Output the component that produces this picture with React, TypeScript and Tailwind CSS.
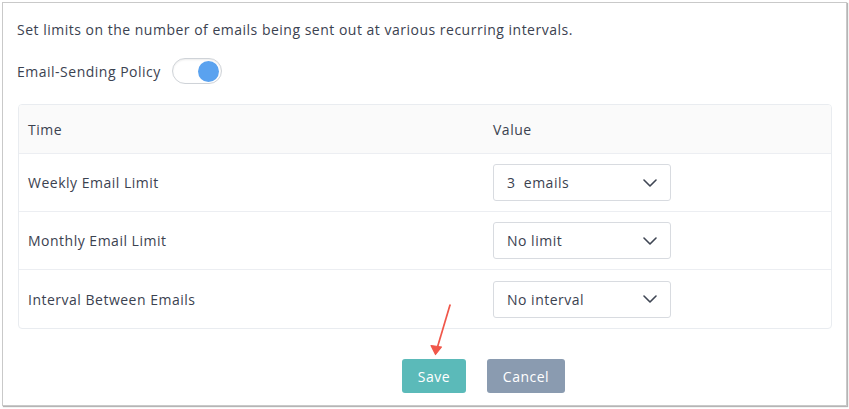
import React from "react";

const rows = [
  { label: "Weekly Email Limit", value: "3  emails" },
  { label: "Monthly Email Limit", value: "No limit" },
  { label: "Interval Between Emails", value: "No interval" },
];

const Chevron = () => (
  <svg width="14" height="8" viewBox="0 0 14 8" fill="none">
    <path d="M1 1l6 6 6-6" stroke="#3f4654" strokeWidth="1.6" strokeLinecap="round" strokeLinejoin="round" />
  </svg>
);

export default function App() {
  return (
    <div className="w-[849px] h-[409px] bg-white pt-[2px] pl-[2px]" style={{ fontFamily: '"Open Sans", sans-serif' }}>
      <div className="relative w-[845px] h-[404px] border border-[#c9c9c9] shadow-[1px_1px_1px_#b5b5b5] px-[14px] text-[#3b4250] text-[14px] tracking-[0.5px]">
        <p className="pt-[17px] leading-[20px]">
          Set limits on the number of emails being sent out at various recurring intervals.
        </p>

        <div className="flex items-center gap-[11px] mt-[17px] h-[28px]">
          <span>Email-Sending Policy</span>
          <div className="w-[50px] h-[26px] rounded-full border border-[#cfd3d8] bg-white shadow-[inset_0_1px_2px_rgba(0,0,0,0.08)] flex items-center justify-end pr-[2px]">
            <div className="w-[21px] h-[21px] rounded-full bg-[#5aa2ef]" />
          </div>
        </div>

        <div className="mt-[19px] ml-[1px] w-[814px] border border-[#e9ecf0] rounded-[4px] overflow-hidden">
          <div className="flex items-center h-[49px] bg-[#fafafa] border-b border-[#eceef2]">
            <div className="w-[474px] pl-[9px]">Time</div>
            <div>Value</div>
          </div>
          {rows.map((r, i) => (
            <div
              key={r.label}
              className={`flex items-center h-[58px] ${i < rows.length - 1 ? "border-b border-[#eceef2]" : ""}`}
            >
              <div className="w-[474px] pl-[9px]">{r.label}</div>
              <div className="w-[178px] h-[37px] border border-[#d8dbe0] rounded-[3px] flex items-center justify-between pl-[13px] pr-[13px]">
                <span className="whitespace-pre">{r.value}</span>
                <Chevron />
              </div>
            </div>
          ))}
        </div>

        <div className="flex gap-[21px] mt-[30px] pl-[385px]">
          <button className="w-[64px] h-[34px] rounded-[3px] bg-[#5bbab9] text-white text-[14px] tracking-[0.5px]">Save</button>
          <button className="w-[78px] h-[34px] rounded-[3px] bg-[#8a9bb0] text-white text-[14px] tracking-[0.5px]">Cancel</button>
        </div>

        <svg className="absolute left-[415px] top-[296px]" width="40" height="60" viewBox="0 0 40 60" fill="none">
          <path d="M32 6 L18 53" stroke="#f0574a" strokeWidth="1.7" strokeLinecap="round" />
          <path d="M13 46.5 L17.5 55.5 L23.5 48 Z" fill="#f0574a" stroke="#f0574a" strokeWidth="1.2" strokeLinejoin="round" />
        </svg>
      </div>
    </div>
  );
}
